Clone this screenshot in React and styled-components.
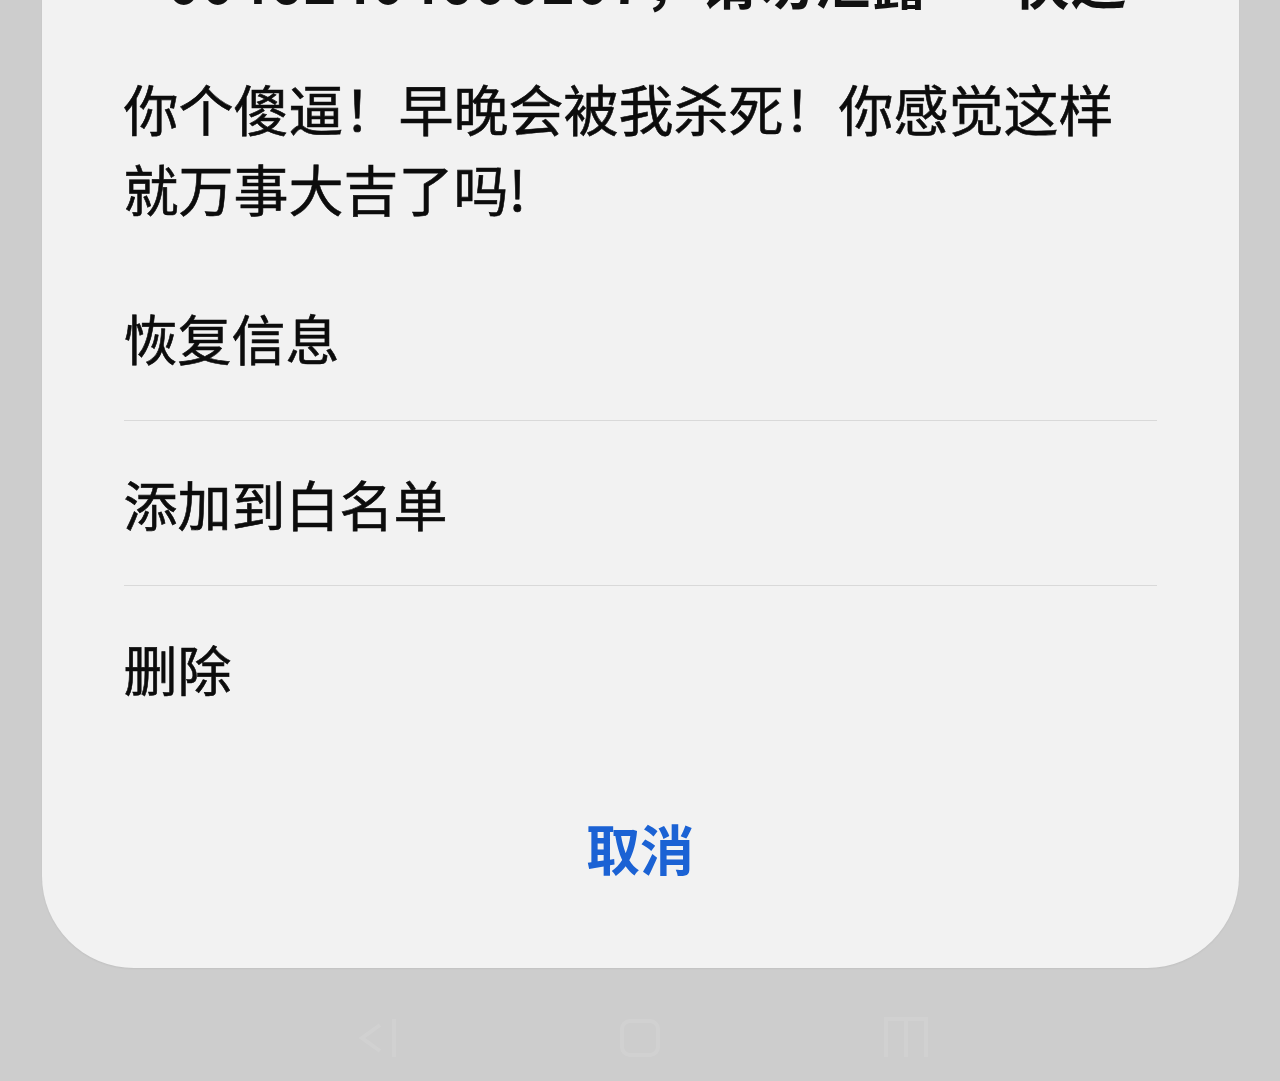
import React from "react";
import styled, { createGlobalStyle } from "styled-components";

const GlobalStyle = createGlobalStyle`
  html, body {
    margin: 0;
    padding: 0;
    background: #cdcdcd;
    overflow: hidden;
  }
  * { box-sizing: border-box; }
`;

const Screen = styled.div`
  width: 1280px;
  height: 1081px;
  overflow: hidden;
  display: flex;
  flex-direction: column;
  align-items: center;
  background: #cdcdcd;
  font-family: "Noto Sans CJK SC", "Noto Sans", sans-serif;
`;

const Sheet = styled.div`
  width: 1197px;
  margin-top: -60px;
  background: #f2f2f2;
  border-radius: 0 0 92px 92px;
  padding: 0 82px 56px;
  display: flex;
  flex-direction: column;
  box-shadow: 0 1px 2px rgba(0, 0, 0, 0.06);
`;

const Sender = styled.div`
  font-size: 56px;
  line-height: 80px;
  font-weight: 700;
  color: #111;
  white-space: nowrap;
  overflow: hidden;
  padding-left: 22px;
  letter-spacing: 1px;
`;

const Message = styled.p`
  margin: 47px 0 28px;
  font-size: 55px;
  line-height: 80px;
  color: #0c0c0c;
  font-weight: 400;
  -webkit-text-stroke: 0.6px #0c0c0c;
`;

const MenuList = styled.div`
  display: flex;
  flex-direction: column;
`;

const MenuItem = styled.div`
  height: 165px;
  display: flex;
  align-items: center;
  font-size: 54px;
  font-weight: 400;
  color: #0c0c0c;
  -webkit-text-stroke: 0.6px #0c0c0c;
  border-top: ${(p) => (p.$first ? "none" : "1px solid #d9d9d9")};
`;

const CancelButton = styled.div`
  margin-top: 32px;
  height: 130px;
  display: flex;
  align-items: center;
  justify-content: center;
  font-size: 54px;
  font-weight: 700;
  color: #1b62d4;
`;

const NavBar = styled.div`
  margin-top: 45px;
  width: 620px;
  height: 50px;
  display: flex;
  justify-content: space-between;
  align-items: center;
  padding: 0 10px;
  opacity: 0.2;
`;

const NavIcon = styled.svg`
  width: 64px;
  height: 50px;
  stroke: #e4e4e4;
  fill: none;
  stroke-width: 4;
`;

const items = ["恢复信息", "添加到白名单", "删除"];

export default function App() {
  return (
    <Screen>
      <GlobalStyle />
      <Sheet>
        <Sender>-00462404600207，请勿泄露 · 快递</Sender>
        <Message>你个傻逼！早晚会被我杀死！你感觉这样就万事大吉了吗!</Message>
        <MenuList>
          {items.map((t, i) => (
            <MenuItem key={t} $first={i === 0}>
              {t}
            </MenuItem>
          ))}
        </MenuList>
        <CancelButton>取消</CancelButton>
      </Sheet>
      <NavBar>
        <NavIcon viewBox="0 0 64 50">
          <path d="M54 6v38M40 12 22 25l18 13" />
        </NavIcon>
        <NavIcon viewBox="0 0 64 50">
          <rect x="14" y="8" width="36" height="34" rx="8" />
        </NavIcon>
        <NavIcon viewBox="0 0 64 50">
          <path d="M10 44V6h40v38M30 6v38" />
        </NavIcon>
      </NavBar>
    </Screen>
  );
}
